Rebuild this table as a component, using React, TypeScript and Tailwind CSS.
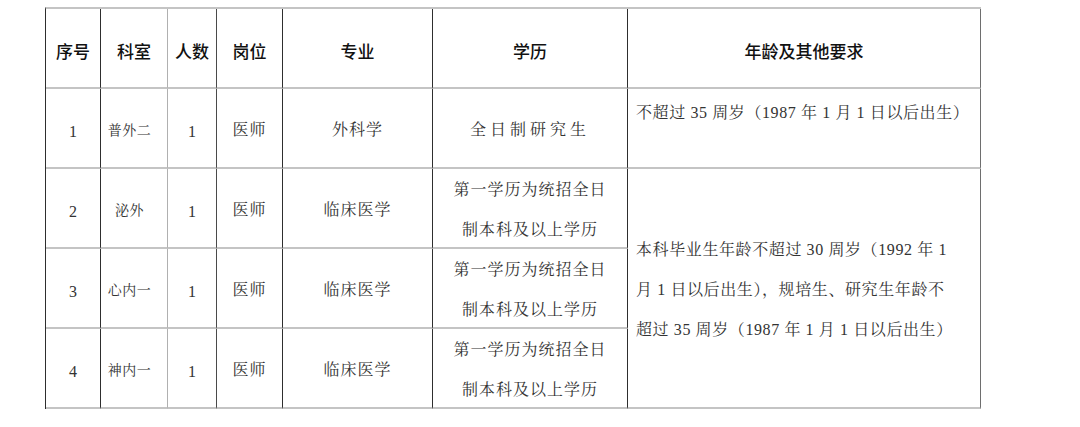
import type { FC, ReactNode } from "react"

const bodyFont = {
  fontFamily:
    '"Liberation Serif", "Noto Serif CJK SC", "Noto Sans CJK SC", serif',
}

const headers = ["序号", "科室", "人数", "岗位", "专业", "学历", "年龄及其他要求"]

// right-border colour per column, as in the scanned table
const colBorder = [
  "border-r-[#2e2e2e]",
  "border-r-[#b0b0b0]",
  "border-r-[#4a4a4a]",
  "border-r-[#2e2e2e]",
  "border-r-[#2e2e2e]",
  "border-r-[#2e2e2e]",
  "border-r-[#6e6e6e]",
]

const Cell: FC<{
  col: number
  className?: string
  children?: ReactNode
}> = ({ col, className = "", children }) => (
  <div
    className={`flex items-center justify-center border-b-2 border-r border-b-[#c4c4c4] text-center ${colBorder[col]} ${className}`}
  >
    {children}
  </div>
)

const rows = [
  { no: "1", dept: "普外二", edu: "全日制研究生" },
  { no: "2", dept: "泌外", edu: "" },
  { no: "3", dept: "心内一", edu: "" },
  { no: "4", dept: "神内一", edu: "" },
]

export default function App() {
  return (
    <div className="h-[427px] w-[1080px] overflow-hidden bg-white pt-[7px] pl-[45px] text-[#111]">
      <div className="grid w-[936px] grid-cols-[55px_67px_49px_66px_150px_195px_353px] grid-rows-[80px_80px_80px_80px_80px] border-t-2 border-l border-t-[#c4c4c4] border-l-[#2e2e2e]">
        {headers.map((h, i) => (
          <Cell key={h} col={i} className="pt-[5px]">
            <span
              className="text-[17px] font-medium"
              style={{ fontFamily: '"Noto Sans CJK SC", sans-serif' }}
            >
              {h}
            </span>
          </Cell>
        ))}

        {rows.map((r, idx) => (
          <Row key={r.no} row={r} first={idx === 0} />
        ))}
      </div>
    </div>
  )
}

const Row: FC<{
  row: { no: string; dept: string; edu: string }
  first: boolean
}> = ({ row, first }) => (
  <>
    <Cell col={0} className="pt-2 text-[#333]">
      <span className="text-[16px]" style={bodyFont}>
        {row.no}
      </span>
    </Cell>
    <Cell col={1} className="pt-1 text-[#333]">
      <span className="pr-[9px] text-[14px] tracking-[0.5px]" style={bodyFont}>
        {row.dept}
      </span>
    </Cell>
    <Cell col={2} className="pt-2 text-[#333]">
      <span className="text-[16px]" style={bodyFont}>
        1
      </span>
    </Cell>
    <Cell col={3} className="pt-1 text-[#333]">
      <span className="text-[16px] tracking-[1px]" style={bodyFont}>
        医师
      </span>
    </Cell>
    <Cell col={4} className="pt-1 text-[#333]">
      <span className="text-[16px] tracking-[1px]" style={bodyFont}>
        {first ? "外科学" : "临床医学"}
      </span>
    </Cell>
    <Cell col={5} className="pt-1 text-[#333]">
      {first ? (
        <span className="text-[16px] tracking-[4px]" style={bodyFont}>
          全日制研究生
        </span>
      ) : (
        <div
          className="flex flex-col text-[16px] leading-[40px] tracking-[1px]"
          style={bodyFont}
        >
          <span>第一学历为统招全日</span>
          <span>制本科及以上学历</span>
        </div>
      )}
    </Cell>
    {first ? (
      <div className="border-r border-b-2 border-r-[#6e6e6e] border-b-[#c4c4c4] px-2 pt-[7px] text-[#333]">
        <p
          className="text-[16px] leading-[34px] tracking-[0.6px]"
          style={bodyFont}
        >
          不超过 35 周岁（1987 年 1 月 1 日以后出生）
        </p>
      </div>
    ) : row.no === "2" ? (
      <div className="row-span-3 flex items-center border-r border-b-2 border-r-[#6e6e6e] border-b-[#c4c4c4] px-2 pt-1 text-[#333]">
        <div
          className="flex flex-col text-[16px] leading-[40px] tracking-[0.6px]"
          style={bodyFont}
        >
          <span>本科毕业生年龄不超过 30 周岁（1992 年 1</span>
          <span>月 1 日以后出生），规培生、研究生年龄不</span>
          <span>超过 35 周岁（1987 年 1 月 1 日以后出生）</span>
        </div>
      </div>
    ) : null}
  </>
)
